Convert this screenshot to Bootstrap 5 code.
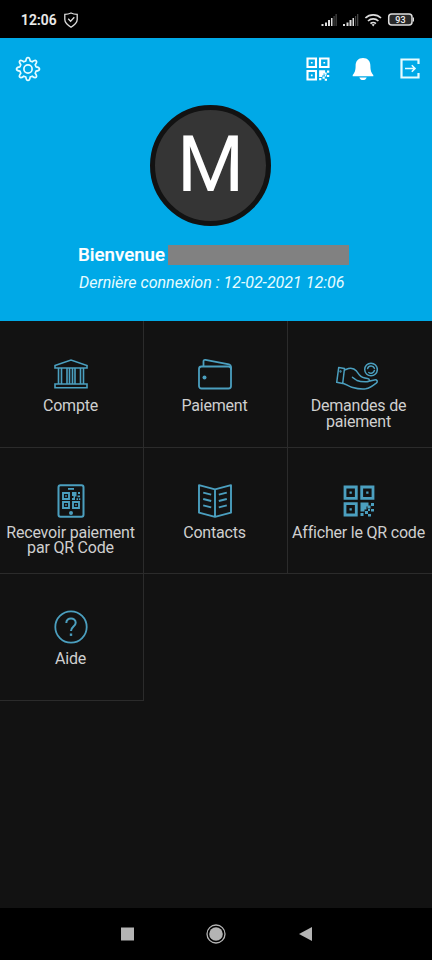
<!DOCTYPE html>
<html lang="fr">
<head>
<meta charset="utf-8">
<meta name="viewport" content="width=device-width, initial-scale=1">
<title>Accueil</title>
<link href="https://cdn.jsdelivr.net/npm/bootstrap@5.3.0/dist/css/bootstrap.min.css" rel="stylesheet">
<style>
body{font-family:Roboto,"Liberation Sans",sans-serif;background:#121212;height:960px;overflow:hidden}
svg{display:block;flex:none}
.statusbar{height:38px;background:#000;color:#eee;padding:1px 18px 0 21px}
.clock{font-size:13.8px;font-weight:500;letter-spacing:.15px;line-height:20px;-webkit-text-stroke:.2px #eee}
.shield{margin-left:7px}
.hero{height:283px;background:#00a9e7;color:#fff}
.hero-actions{height:62px;padding:0 12px 0 15px}
.icon-bell{margin-left:22px}
.icon-exit{margin-left:26px}
.avatar{width:121px;height:121px;margin:4.5px 11px 0 0;border:5px solid #121212;background:#353535;font-size:77px;line-height:1}
.hello{margin-top:19.5px;height:22px;padding-left:78px}
.hello-text{font-size:18.7px;font-weight:500;line-height:21px;width:87px;white-space:nowrap;-webkit-text-stroke:.2px #fff}
.mask-name{width:181px;height:20px;margin-left:2.5px;background:#818181}
.last{font-size:16px;line-height:20px;margin-top:6px;padding-left:79px;color:#e6fcff;white-space:nowrap}
.tiles{grid-template-columns:144px 144px 144px;grid-auto-rows:126.5px}
.tile{border-right:1px solid #2b2b2b;border-bottom:1px solid #2b2b2b;padding:36px 2px 0 0;color:#cfcfcf}
.tile svg{color:#4b9fbf}
.tile:nth-child(3n){border-right:0;padding-right:3px}
.tile .icon-hand{margin-right:4px}
.tile-label{font-size:16px;line-height:15.5px;margin-top:7px;white-space:nowrap;letter-spacing:-.2px}
.softkeys{height:52px;background:#000}
</style>
</head>
<body class="d-flex flex-column">
<svg width="0" height="0" class="position-absolute">
  <defs>
    <symbol id="qr" viewBox="0 0 32 32">
      <g fill="none" stroke="currentColor" stroke-width="2.800"><path d="M2 2h11.300v11.300H2zM18.700 2H30v11.300H18.700zM2 18.700h11.300V30H2z"/></g>
      <path fill="currentColor" d="M6.500 6.500h2.300v2.300H6.500zM23.200 6.500h2.300v2.300h-2.300zM6.500 23.200h2.300v2.300H6.500zM17.500 17.500h8v3h2v3h-3v-2h-1v3h-2v2h-4zM28 18h3v3h-3zM25 24h2v2h-2zM28 24h3v2.500h-3zM17.500 28h3v3h-3zM22 26h3v3h-3zM25 29h3v2.500h-3z"/>
    </symbol>
  </defs>
</svg>

<header class="statusbar d-flex align-items-center justify-content-between">
  <div class="d-flex align-items-center">
    <span class="clock">12:06</span>
    <svg class="shield" width="14" height="16" viewBox="0 0 14 16" fill="none" stroke="#ddd" stroke-width="1.300"><path d="M7 1c-2 1-4 1.300-6.200 1.300v5.200c0 3.500 3 5.700 6.200 7.700 3.200-2 6.200-4.200 6.200-7.700V2.300C11 2.300 9 2 7 1z"/><path d="M4.200 6.800l2.400 2.500 3.700-4"/></svg>
  </div>
  <svg width="94" height="16" viewBox="0 0 94 16">
    <g id="bars"><path fill="#ddd" d="M1.500 12h2v2h-2zM5 10.500h2V14H5zM8 8h2v6H8zM11 6h1.500v8H11z"/><path fill="#444" d="M13.500 4h1.200v10h-1.200zM15.500 2h1.300v12h-1.300z"/></g>
    <use href="#bars" x="21.500"/>
    <g fill="none" stroke="#ddd" stroke-width="1.700"><path d="M45.400 6c4.300-4.300 11.300-4.300 15.600 0M48 9c2.900-2.900 7.500-2.900 10.400 0M50.500 11.600c1.500-1.500 3.900-1.500 5.400 0"/></g>
    <path fill="#ddd" d="M51.600 12.600q1.600-1.200 3.200 0l-1.600 1.900z"/>
    <rect x="68.700" y="2" width="23.300" height="11" rx="3" fill="#292929" stroke="#ddd" stroke-width="1.500"/><path fill="#ddd" d="M92.800 5.500H94v4h-1.200z"/>
    <text x="80.400" y="10.900" text-anchor="middle" font-size="9" font-weight="500" fill="#eee">93</text>
  </svg>
</header>

<section class="hero d-flex flex-column">
  <nav class="hero-actions d-flex align-items-center">
    <svg width="26" height="26" viewBox="-13 -13 26 26" fill="none" stroke="#e6fcff" stroke-width="1.700" stroke-linejoin="round"><path d="M-2.200-8Q-1.800-11.500 0-11.500T2.200-8L4.200-7.200Q7-9.300 8.200-8.200T7.200-4.200L8-2.200Q11.500-1.800 11.500 0T8 2.200L7.200 4.200Q9.300 7 8.200 8.200T4.200 7.200L2.200 8Q1.800 11.500 0 11.500T-2.200 8L-4.200 7.200Q-7 9.300-8.200 8.200T-7.200 4.200L-8 2.200Q-11.500 1.800-11.500 0T-8-2.200L-7.200-4.200Q-9.300-7-8.200-8.200T-4.200-7.200z"/><circle r="4.100"/></svg>
    <svg class="ms-auto" width="24" height="24"><use href="#qr" width="24" height="24"/></svg>
    <svg class="icon-bell" width="22" height="24" viewBox="0 0 22 24" fill="#fff"><path d="M11 1c-4.800 0-7.400 3-7.400 8 0 5-1.200 7-2.900 9v1.200h20.600V18c-1.700-2-2.900-4-2.900-9 0-5-2.600-8-7.400-8zM7.300 20.400h7.400c-.6 1.700-1.900 2.600-3.700 2.600s-3.100-.9-3.700-2.600z"/></svg>
    <svg class="icon-exit" width="20" height="22" viewBox="0 0 20 22" fill="none" stroke="#e6fcff"><path d="M18.500 6V1.500H1.500v18h17V15" stroke-width="2.200"/><path d="M5 10.500h10M11.800 7.300l3.200 3.200-3.200 3.200" stroke-width="1.600"/></svg>
  </nav>
  <div class="avatar rounded-circle d-flex align-items-center justify-content-center align-self-center">M</div>
  <div class="hello d-flex align-items-start"><span class="hello-text">Bienvenue</span><span class="mask-name"></span></div>
  <div class="last fst-italic">Dernière connexion : 12-02-2021 12:06</div>
</section>

<main class="tiles d-grid flex-grow-1 align-content-start text-center">
  <div class="tile d-flex flex-column align-items-center">
    <svg width="34" height="34" viewBox="0 0 34 34" fill="none" stroke="currentColor" stroke-width="1.600"><path d="M1 8.500 17 3l16 5.500V11H1zM1 27h32v3.800H1zM4.500 11v16M7.500 11v16M13 11v16M15.500 11v16M18.500 11v16M21 11v16M26.500 11v16M29.500 11v16"/></svg>
    <div class="tile-label">Compte</div>
  </div>
  <div class="tile d-flex flex-column align-items-center">
    <svg width="34" height="34" viewBox="0 0 34 34" fill="none" stroke="currentColor" stroke-width="1.800" stroke-linejoin="round"><rect x="1" y="9.500" width="32" height="22" rx="2.500"/><path d="M5.500 9.500V4.500q0-2 2-1.600L31 7.300q2 .5 2 2.500v3"/><circle cx="6.500" cy="20.500" r="2" fill="currentColor" stroke="none"/></svg>
    <div class="tile-label">Paiement</div>
  </div>
  <div class="tile d-flex flex-column align-items-center">
    <svg class="icon-hand" width="42" height="34" viewBox="0 0 42 34" fill="none" stroke="currentColor" stroke-width="1.500" stroke-linejoin="round" stroke-linecap="round"><path d="M2.700 10.500l5.800 1-1.800 15-6-1.200zM8.500 13l4-1.500c3-.8 6 .2 8 2.600l3 4c1.500 1.800 5 3.200 8 3.500 2.500.3 2.500 3.200 0 3.200-3.500.2-8-.2-10.500-1.300l-4.500-3.200M31.500 24.600l7-1.700c2.600-.5 3.600 1.600 1.700 3.200-3.500 2.800-7 5-10.500 5.700-4 .7-10-.5-14-1.600-3.500-1-5.500-3-9-4"/><circle cx="4.500" cy="14.500" r=".4"/><circle cx="35" cy="12.500" r="6.300"/><path d="M31.600 11.500a3.600 3.600 0 0 1 6.800-.3M38.400 13.500a3.600 3.600 0 0 1-5.600 2"/></svg>
    <div class="tile-label">Demandes de<br>paiement</div>
  </div>
  <div class="tile d-flex flex-column align-items-center">
    <svg width="28" height="34" viewBox="0 0 28 34"><rect x="1.500" y="1.300" width="25" height="31.500" rx="2" fill="none" stroke="currentColor" stroke-width="2"/><path fill="currentColor" d="M11 4h6v1.800h-6z"/><circle cx="14" cy="29" r="2" fill="currentColor"/><g fill="none" stroke="currentColor" stroke-width="1.900"><path d="M6 9h6v6H6zM6 18h6v6H6zM16 18h6v6h-6z"/></g><path fill="currentColor" d="M8.200 11.200h1.600v1.600H8.200zM8.200 20.200h1.600v1.600H8.200zM18.200 20.200h1.600v1.600h-1.600zM15 8h4.500v4.500H18V16h-3v-2h1.500v-2H15zM21 8h2v2h-2zM20.500 11.500h2.500v1.800h-2.500zM19.500 14.200h1.600V16h-1.600zM22 14.200h1.300V16H22z"/></svg>
    <div class="tile-label">Recevoir paiement<br>par QR Code</div>
  </div>
  <div class="tile d-flex flex-column align-items-center">
    <svg width="34" height="34" viewBox="0 0 34 34" fill="none" stroke="currentColor" stroke-width="1.900" stroke-linejoin="round"><path d="M17 5.300 1 1.200v27.500l16 4.200 16-4.200V1.200zM17 5.300v27.600M5.200 8.600l8 2M5.200 15l8 2M5.200 21.300l8 2M28.800 8.600l-8 2M28.800 15l-8 2M28.800 21.300l-8 2"/></svg>
    <div class="tile-label">Contacts</div>
  </div>
  <div class="tile d-flex flex-column align-items-center">
    <svg width="34" height="34"><use href="#qr" x="1" y="1" width="32" height="32"/></svg>
    <div class="tile-label">Afficher le QR code</div>
  </div>
  <div class="tile d-flex flex-column align-items-center">
    <svg width="34" height="34" viewBox="0 0 34 34" fill="none" stroke="currentColor" stroke-width="1.800"><circle cx="17" cy="17" r="15.700"/><path d="M12.300 13c0-6.200 9.400-6 9.400-.3 0 3.800-4.700 4-4.700 8.300" stroke-width="2"/><path d="M17 23.500v2.400" stroke-width="2.400"/></svg>
    <div class="tile-label">Aide</div>
  </div>
</main>

<footer class="softkeys d-flex align-items-center justify-content-center">
  <svg width="194" height="22" viewBox="0 0 194 22" fill="#b4b4b4"><path d="M2 4.500h13v13H2z"/><circle cx="97" cy="11" r="6.800"/><circle cx="97" cy="11" r="9" fill="none" stroke="#b4b4b4" stroke-width="1.300"/><path d="M193 4v14l-13-7z"/></svg>
</footer>
<script src="https://cdn.jsdelivr.net/npm/bootstrap@5.3.0/dist/js/bootstrap.bundle.min.js"></script>
</body>
</html>
